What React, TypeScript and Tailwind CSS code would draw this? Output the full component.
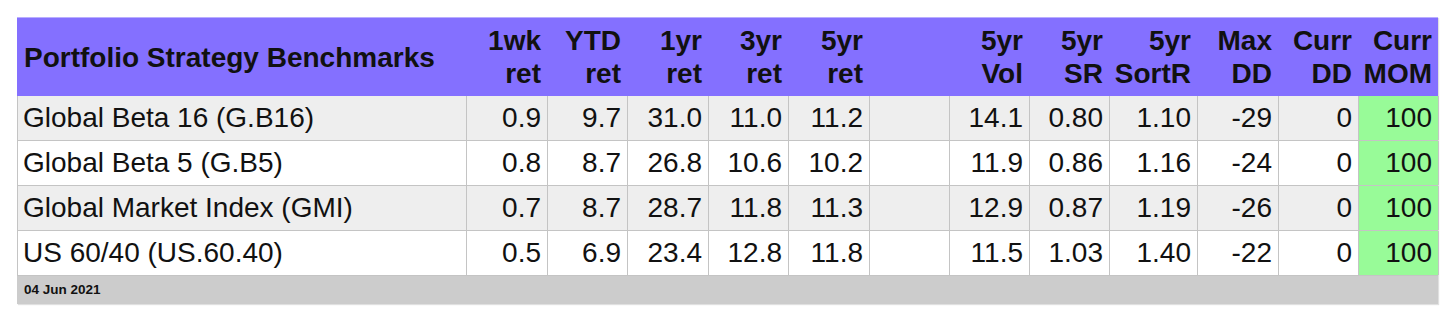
import React from "react";

const cols =
  "grid grid-cols-[449px_81px_80px_81px_80px_81px_80px_80px_80px_88px_81px_80px_80px]";

const headers: [string, string][] = [
  ["1wk", "ret"],
  ["YTD", "ret"],
  ["1yr", "ret"],
  ["3yr", "ret"],
  ["5yr", "ret"],
  ["", ""],
  ["5yr", "Vol"],
  ["5yr", "SR"],
  ["5yr", "SortR"],
  ["Max", "DD"],
  ["Curr", "DD"],
  ["Curr", "MOM"],
];

const rows: string[][] = [
  ["Global Beta 16 (G.B16)", "0.9", "9.7", "31.0", "11.0", "11.2", "", "14.1", "0.80", "1.10", "-29", "0", "100"],
  ["Global Beta 5 (G.B5)", "0.8", "8.7", "26.8", "10.6", "10.2", "", "11.9", "0.86", "1.16", "-24", "0", "100"],
  ["Global Market Index (GMI)", "0.7", "8.7", "28.7", "11.8", "11.3", "", "12.9", "0.87", "1.19", "-26", "0", "100"],
  ["US 60/40 (US.60.40)", "0.5", "6.9", "23.4", "12.8", "11.8", "", "11.5", "1.03", "1.40", "-22", "0", "100"],
];

export default function App() {
  return (
    <div
      className="bg-white w-[1456px] h-[323px] pt-[17px] pl-[17px]"
      style={{ fontFamily: '"Liberation Sans", Arial, sans-serif' }}
    >
      <div className="w-[1421px] shadow-[1px_1px_1px_rgba(0,0,0,0.12)]">
        <div className={`${cols} bg-[#8470ff] h-[79px] text-[28px] font-bold text-[#111] leading-[33px] border-t border-[#b9aeff]`}>
          <div className="flex items-center pl-[7px]">Portfolio Strategy Benchmarks</div>
          {headers.map(([a, b], i) => (
            <div key={i} className="flex flex-col justify-center items-end pr-[6px] whitespace-nowrap">
              <span>{a || "\u00a0"}</span>
              <span>{b || "\u00a0"}</span>
            </div>
          ))}
        </div>
        {rows.map((r, ri) => (
          <div
            key={ri}
            className={`${cols} h-[45px] text-[28px] text-[#111] border-b border-l border-[#c4c4c4] ${
              ri % 2 === 0 ? "bg-[#eeeeee]" : "bg-white"
            }`}
          >
            {r.map((c, ci) => (
              <div
                key={ci}
                className={`flex items-center border-r border-[#c4c4c4] whitespace-nowrap ${
                  ci === 0 ? "pl-[6px] -ml-px" : "justify-end pr-[6px]"
                } ${ci === 12 ? "bg-[#98fb98]" : ""}`}
              >
                {c}
              </div>
            ))}
          </div>
        ))}
        <div className="h-[28px] bg-[#cccccc] flex items-center pl-[7px] text-[13.5px] font-bold text-[#111]">
          04 Jun 2021
        </div>
      </div>
    </div>
  );
}
